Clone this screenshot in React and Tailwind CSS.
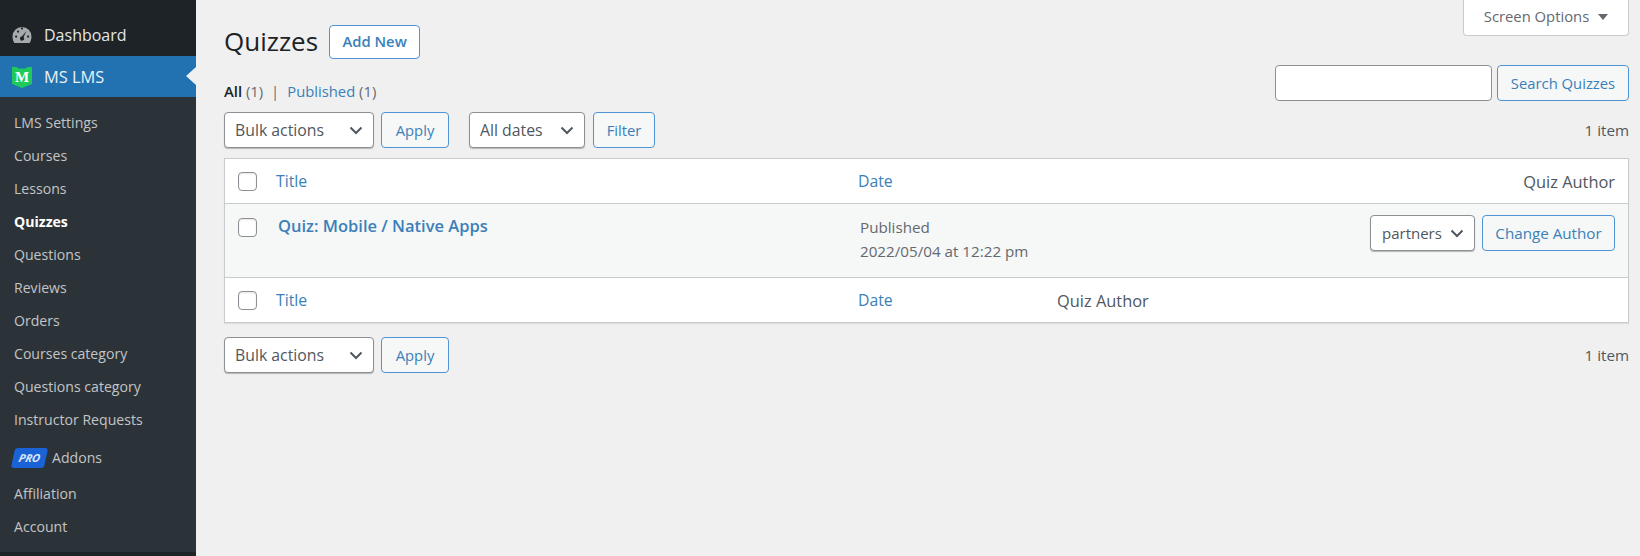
import React from 'react';

const subMenu = [
    { label: "LMS Settings" },
    { label: "Courses" },
    { label: "Lessons" },
    { label: "Quizzes", current: true },
    { label: "Questions" },
    { label: "Reviews" },
    { label: "Orders" },
    { label: "Courses category" },
    { label: "Questions category" },
    { label: "Instructor Requests" },
    { label: "Addons", pro: true },
    { label: "Affiliation" },
    { label: "Account" },
];

function Chevron({ className }) {
    return (
        <svg className={className} width="14" height="9" viewBox="0 0 14 9" fill="none">
            <path d="M1.5 1.5 7 7l5.5-5.5" stroke="#50575e" strokeWidth="2" />
        </svg>
    );
}

function Select({ label, width, textClass = "text-[15.8px]" }) {
    return (
        <div className={`${width} h-[36px] pl-[10px] pr-[10px] flex items-center justify-between bg-white border border-[#8c8f94] rounded-[4px] shadow-[0_1px_1px_#b5b5b5] text-[#50575e]`}>
            <span className={`${textClass} pt-[1px]`}>{label}</span>
            <Chevron />
        </div>
    );
}

function Button({ label, width, bg = "bg-[#f6f7f7]", height = "h-[36px]", textClass = "text-[14.8px]" }) {
    return (
        <div className={`${width} ${height} ${bg} ${textClass} flex items-center justify-center border border-[#4f94d4] rounded-[4px] text-[#3b80b9]`}>
            {label}
        </div>
    );
}

function Checkbox() {
    return <div className="w-[19px] h-[19px] bg-white border border-[#8c8f94] rounded-[4px] shadow-[inset_0_1px_2px_rgba(0,0,0,0.1)]"></div>;
}

function Sidebar() {
    return (
        <aside className="w-[196px] shrink-0 flex flex-col bg-[#1d2327]">
            <div className="h-[56px] pt-[14px] pl-[12px] flex items-center gap-[12px] text-[#e4e6e7] text-[16px]">
                <svg width="20" height="18" viewBox="0 0 20 18">
                    <path fill="#a7aaad" fillRule="evenodd" d="M10 1a9.5 9.500 0 0 0-9.500 9.500c0 2.500.7 4.800 1.800 6.500h15.400c1.100-1.700 1.800-4 1.800-6.500A9.500 9.500 0 0 0 10 1Zm-.2 2.500a1 1 0 1 1 .4 0Zm-4.800 2a1.100 1.100 0 1 1 0 .1Zm9.500-.5-3 6.200a2 2 0 1 1-1.700-.6ZM3 10.500a1.100 1.100 0 1 1 0 .1Zm12 0a1.100 1.100 0 1 1 0 .1Z" />
                </svg>
                <span>Dashboard</span>
            </div>
            <div className="relative h-[41px] bg-[#2271b1] pl-[12px] pt-[1px] flex items-center gap-[12px] text-[#e8f0f6] text-[16.400px]">
                <svg width="20" height="21" viewBox="0 0 20 21">
                    <path fill="#1fca5c" d="M0 0h5l1 1.500h8L15 0h5v17l-10 4-10-4Z" />
                    <text x="10" y="15" textAnchor="middle" fontFamily="Liberation Serif" fontWeight="700" fontSize="15" fill="#ffffff">M</text>
                </svg>
                <span>MS LMS</span>
                <div className="absolute right-0 top-[11px] border-y-[9px] border-r-[10px] border-y-transparent border-r-[#f0f0f0]"></div>
            </div>
            <nav className="flex-1 bg-[#2c3338] pt-[9px] flex flex-col">
                {subMenu.map((item) => (
                    <div key={item.label} className={`${item.pro ? "h-[41px] pt-[2px] gap-[6px] pl-[13px]" : "h-[33px] pl-[14px]"} ${item.current ? "text-white font-bold" : "text-[#c3c4c7]"} flex items-center text-[14.1px]`}>
                        {item.pro && (
                            <span className="w-[33px] h-[20px] -skew-x-12 rounded-[3px] bg-[#1a62d6] flex items-center justify-center text-[#dbe7fb] text-[11px] font-bold italic">PRO</span>
                        )}
                        <span>{item.label}</span>
                    </div>
                ))}
            </nav>
            <div className="h-[4px]"></div>
        </aside>
    );
}

function ColumnRow({ footer }) {
    return (
        <div className={`${footer ? "h-[45px] border-t border-[#c9cbce]" : "h-[45px] border-b border-[#c9cbce]"} flex items-center text-[15.8px]`}>
            <div className="w-[51px] pl-[13px] shrink-0"><Checkbox /></div>
            <a className="w-[582px] pt-[2px] shrink-0 text-[#3b80b9]">Title</a>
            <a className="w-[199px] pt-[2px] shrink-0 text-[#3b80b9]">Date</a>
            <span className={`${footer ? "" : "flex-1 text-right pr-[13px]"} pt-[2px] text-[16.4px] text-[#50575e]`}>Quiz Author</span>
        </div>
    );
}

export default function App() {
    return (
        <div className="flex h-screen w-full overflow-hidden bg-[#f0f0f0] font-['Open_Sans',sans-serif]">
            <Sidebar />
            <main className="flex-1 pl-[28px] pr-[11px] flex flex-col">
                <div className="flex justify-end h-[36px]">
                    <div className="w-[166px] h-[36px] bg-white border border-t-0 border-[#c9cbce] rounded-b-[4px] flex items-center justify-center gap-[9px] pb-[2px] text-[#646970] text-[14.8px]">
                        <span>Screen Options</span>
                        <span className="border-x-[5px] border-t-[6px] border-x-transparent border-t-[#646970]"></span>
                    </div>
                </div>
                <div className="flex justify-between h-[64px]">
                    <div>
                        <div className="flex items-start -mt-[11px] gap-[11px]">
                            <h1 className="text-[#1d2327] text-[26px] leading-[33px] pb-[2px]">Quizzes</h1>
                            <Button label="Add New" width="w-[91px]" height="h-[34px]" bg="bg-white" textClass="text-[14.8px] font-semibold pb-[1px]" />
                        </div>
                        <div className="mt-[20px] text-[14.8px] text-[#646970] flex items-center gap-[8px]">
                            <span><b className="text-[#1d2327] font-semibold">All</b> (1)</span>
                            <span>|</span>
                            <span><a className="text-[#3b80b9]">Published</a> (1)</span>
                        </div>
                    </div>
                    <div className="flex gap-[5px] mt-[29px]">
                        <div className="w-[217px] h-[36px] bg-white border border-[#8c8f94] rounded-[4px]"></div>
                        <Button label="Search Quizzes" width="w-[132px]" />
                    </div>
                </div>
                <div className="flex items-center h-[36px] mt-[12px]">
                    <Select label="Bulk actions" width="w-[150px]" />
                    <div className="ml-[7px]"><Button label="Apply" width="w-[68px]" /></div>
                    <div className="ml-[20px]"><Select label="All dates" width="w-[116px]" /></div>
                    <div className="ml-[8px]"><Button label="Filter" width="w-[62px]" /></div>
                    <span className="ml-auto text-[15.2px] text-[#50575e]">1 item</span>
                </div>
                <div className="mt-[10px] bg-white border border-[#c9cbce] shadow-[0_1px_1px_rgba(0,0,0,0.08)]">
                    <ColumnRow />
                    <div className="h-[73px] bg-[#f6f7f7] flex">
                        <div className="w-[53px] pl-[13px] pt-[14px] shrink-0"><Checkbox /></div>
                        <a className="w-[582px] pt-[10px] shrink-0 font-semibold text-[16.5px] text-[#3b80b9]">Quiz: Mobile / Native Apps</a>
                        <div className="pt-[11px] text-[15.2px] leading-[24px] text-[#646970]">
                            <div>Published</div>
                            <div>2022/05/04 at 12:22 pm</div>
                        </div>
                        <div className="ml-auto pt-[11px] pr-[13px] flex gap-[7px]">
                            <Select label="partners" width="w-[105px]" textClass="text-[15px] pl-[1px]" />
                            <Button label="Change Author" width="w-[133px]" textClass="text-[15.2px]" />
                        </div>
                    </div>
                    <ColumnRow footer />
                </div>
                <div className="flex items-center h-[36px] mt-[14px]">
                    <Select label="Bulk actions" width="w-[150px]" />
                    <div className="ml-[7px]"><Button label="Apply" width="w-[68px]" /></div>
                    <span className="ml-auto text-[15.2px] text-[#50575e]">1 item</span>
                </div>
            </main>
        </div>
    );
}
